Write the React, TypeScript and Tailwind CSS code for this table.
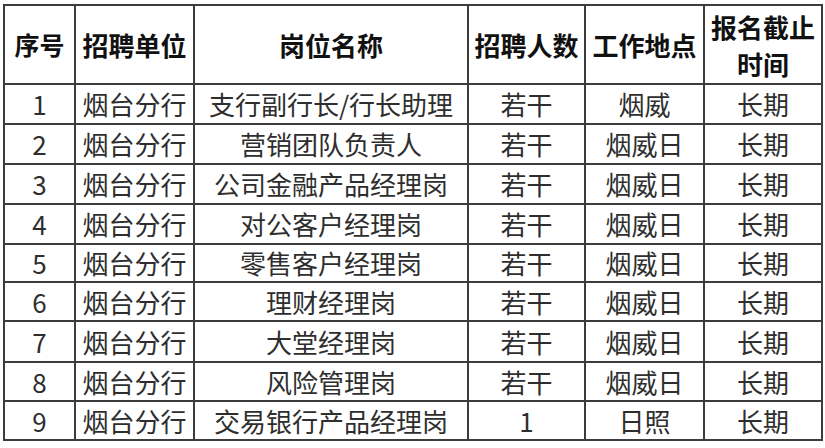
const COLS = [71, 119, 274, 117, 119, 118]

const ROWS = [
  { no: "1", unit: "烟台分行", post: "支行副行长/行长助理", count: "若干", place: "烟威", due: "长期", h: 40 },
  { no: "2", unit: "烟台分行", post: "营销团队负责人", count: "若干", place: "烟威日", due: "长期", h: 40 },
  { no: "3", unit: "烟台分行", post: "公司金融产品经理岗", count: "若干", place: "烟威日", due: "长期", h: 40 },
  { no: "4", unit: "烟台分行", post: "对公客户经理岗", count: "若干", place: "烟威日", due: "长期", h: 40 },
  { no: "5", unit: "烟台分行", post: "零售客户经理岗", count: "若干", place: "烟威日", due: "长期", h: 38 },
  { no: "6", unit: "烟台分行", post: "理财经理岗", count: "若干", place: "烟威日", due: "长期", h: 39 },
  { no: "7", unit: "烟台分行", post: "大堂经理岗", count: "若干", place: "烟威日", due: "长期", h: 41 },
  { no: "8", unit: "烟台分行", post: "风险管理岗", count: "若干", place: "烟威日", due: "长期", h: 39 },
  { no: "9", unit: "烟台分行", post: "交易银行产品经理岗", count: "1", place: "日照", due: "长期", h: 39 },
]

const th = "border-2 border-[#3c3c3c] p-0 text-center align-middle font-bold text-[#111]"
const td = "border-2 border-[#3c3c3c] p-0 text-center align-middle text-[#2e2e2e]"

export default function App() {
  return (
    <div
      className="min-h-[448px] w-[825px] bg-white pl-[3px] pt-[4px]"
      style={{ fontFamily: '"Noto Sans CJK SC", "Noto Sans", sans-serif' }}
    >
      <table className="w-[818px] table-fixed border-collapse text-[26px] leading-none">
        <colgroup>
          {COLS.map((w, i) => (
            <col key={i} style={{ width: w }} />
          ))}
        </colgroup>
        <thead>
          <tr className="h-[79px]">
            <th className={`${th} text-[25px]`}>序号</th>
            <th className={th}>招聘单位</th>
            <th className={th}>岗位名称</th>
            <th className={th}>招聘人数</th>
            <th className={th}>工作地点</th>
            <th className={`${th} leading-[37px]`}>
              报名截止
              <br />
              时间
            </th>
          </tr>
        </thead>
        <tbody>
          {ROWS.map((r) => (
            <tr key={r.no} style={{ height: r.h }}>
              <td className={td}>{r.no}</td>
              <td className={td}>{r.unit}</td>
              <td className={td}>{r.post}</td>
              <td className={td}>{r.count}</td>
              <td className={td}>{r.place}</td>
              <td className={td}>{r.due}</td>
            </tr>
          ))}
        </tbody>
      </table>
    </div>
  )
}
